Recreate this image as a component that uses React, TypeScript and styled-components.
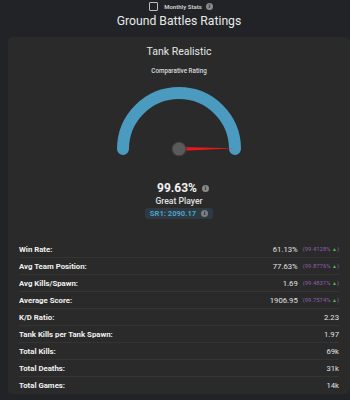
import React from "react";
import styled, { createGlobalStyle } from "styled-components";

const Global = createGlobalStyle`
  html, body { margin: 0; padding: 0; background: #212326; overflow: hidden; }
  body { font-family: Roboto, "Liberation Sans", sans-serif; color: #e6e6e6; }
`;

const Page = styled.div`
  width: 358px;
  display: flex;
  flex-direction: column;
  align-items: center;
`;

const TopRow = styled.div`
  display: flex;
  align-items: center;
  gap: 4px;
  height: 13px;
  margin-left: 4px;
`;

const Checkbox = styled.span`
  width: 7px;
  height: 7px;
  border: 1px solid #bdbdbd;
  border-radius: 1px;
  margin-right: 2px;
`;

const TinyLabel = styled.span`
  font-size: 6px;
  font-weight: 700;
  color: #c8c8c8;
`;

const Info = styled.span<{ $size?: number; $bg?: string }>`
  display: inline-flex;
  align-items: center;
  justify-content: center;
  width: ${(p) => p.$size ?? 7}px;
  height: ${(p) => p.$size ?? 7}px;
  border-radius: 50%;
  background: ${(p) => p.$bg ?? "#8a8a8a"};
  color: #2a2a2a;
  font-size: ${(p) => (p.$size ?? 7) - 2}px;
  font-weight: 700;
  line-height: 1;
  font-family: "DejaVu Sans", sans-serif;
`;

const Title = styled.h1`
  margin: 0;
  font-size: 12.2px;
  font-weight: 400;
  line-height: 16px;
  color: #e8e8e8;
`;

const Card = styled.section`
  align-self: stretch;
  margin: 8px 8px 0 8px;
  background: #2a2a2a;
  border-radius: 5px;
  display: flex;
  flex-direction: column;
  align-items: center;
  padding: 8px 11px 0 11px;
`;

const CardTitle = styled.h2`
  margin: 0;
  font-size: 10.5px;
  font-weight: 400;
  line-height: 14px;
  color: #e6e6e6;
`;

const SubTitle = styled.div`
  margin-top: 8px;
  font-size: 6.3px;
  font-weight: 500;
  color: #dcdcdc;
  line-height: 8px;
`;

const Gauge = styled.svg`
  margin-top: 5px;
  display: block;
`;

const ScoreRow = styled.div`
  margin-top: 20px;
  display: flex;
  align-items: center;
  gap: 5px;
  margin-left: 8px;
  height: 16px;
`;

const Score = styled.span`
  font-size: 12px;
  font-weight: 700;
  color: #f2f2f2;
  line-height: 16px;
`;

const Rank = styled.div`
  font-size: 8.6px;
  font-weight: 500;
  color: #e0e0e0;
  line-height: 11px;
`;

const Badge = styled.div`
  margin-top: 1px;
  display: flex;
  align-items: center;
  gap: 5px;
  background: #2e3a42;
  border-radius: 3px;
  padding: 0 5px;
  height: 11px;
`;

const BadgeText = styled.span`
  font-size: 7.6px;
  font-weight: 700;
  color: #4f9fcb;
`;

const Table = styled.div`
  align-self: stretch;
  margin-top: 22px;
  display: flex;
  flex-direction: column;
`;

const Row = styled.div<{ $last?: boolean }>`
  height: 17px;
  display: flex;
  align-items: center;
  justify-content: space-between;
  border-bottom: 1px solid ${(p) => (p.$last ? "transparent" : "#343434")};
  box-sizing: border-box;
`;

const Label = styled.span`
  font-size: 7.8px;
  font-weight: 700;
  color: #f0f0f0;
`;

const Value = styled.span`
  display: flex;
  align-items: center;
  gap: 5px;
  font-size: 7.7px;
  color: #e2e2e2;
`;

const Pct = styled.span`
  font-size: 5.9px;
  color: #8c5fae;
`;

const Up = styled.span`
  color: #3fbf55;
  font-size: 5px;
`;

type Stat = { label: string; value: string; pct?: string };

const stats: Stat[] = [
  { label: "Win Rate:", value: "61.13%", pct: "99.4128%" },
  { label: "Avg Team Position:", value: "77.63%", pct: "99.8776%" },
  { label: "Avg Kills/Spawn:", value: "1.69", pct: "99.4831%" },
  { label: "Average Score:", value: "1906.95", pct: "99.7574%" },
  { label: "K/D Ratio:", value: "2.23" },
  { label: "Tank Kills per Tank Spawn:", value: "1.97" },
  { label: "Total Kills:", value: "69k" },
  { label: "Total Deaths:", value: "31k" },
  { label: "Total Games:", value: "14k" },
];

function GaugeChart({ ratio }: { ratio: number }) {
  const cx = 70;
  const cy = 69;
  const r = 56;
  const a = Math.PI * (1 - ratio);
  const tx = cx + r * Math.cos(a);
  const ty = cy - r * Math.sin(a);
  const nx = -Math.sin(a) * 2;
  const ny = -Math.cos(a) * 2;
  return (
    <Gauge width={140} height={80} viewBox="0 0 140 80">
      <path
        d={`M ${cx - r} ${cy} A ${r} ${r} 0 0 1 ${cx + r} ${cy}`}
        fill="none"
        stroke="#4b9bc0"
        strokeWidth={12}
        strokeLinecap="round"
      />
      <polygon
        points={`${cx + nx},${cy + ny} ${cx - nx},${cy - ny} ${tx},${ty}`}
        fill="#e8191c"
      />
      <circle cx={cx} cy={cy} r={7} fill="#5a5a5a" stroke="#3c3c3c" strokeWidth={1.2} />
    </Gauge>
  );
}

export default function App() {
  return (
    <>
      <Global />
      <Page>
        <TopRow>
          <Checkbox />
          <TinyLabel>Monthly Stats</TinyLabel>
          <Info $size={7}>i</Info>
        </TopRow>
        <Title>Ground Battles Ratings</Title>
        <Card>
          <CardTitle>Tank Realistic</CardTitle>
          <SubTitle>Comparative Rating</SubTitle>
          <GaugeChart ratio={0.9963} />
          <ScoreRow>
            <Score>99.63%</Score>
            <Info $size={7}>i</Info>
          </ScoreRow>
          <Rank>Great Player</Rank>
          <Badge>
            <BadgeText>SR1: 2090.17</BadgeText>
            <Info $size={7} $bg="#7a7f84">i</Info>
          </Badge>
          <Table>
            {stats.map((s, i) => (
              <Row key={s.label} $last={i === stats.length - 1}>
                <Label>{s.label}</Label>
                <Value>
                  {s.value}
                  {s.pct && (
                    <Pct>
                      ({s.pct} <Up>▲</Up>)
                    </Pct>
                  )}
                </Value>
              </Row>
            ))}
          </Table>
        </Card>
      </Page>
    </>
  );
}
